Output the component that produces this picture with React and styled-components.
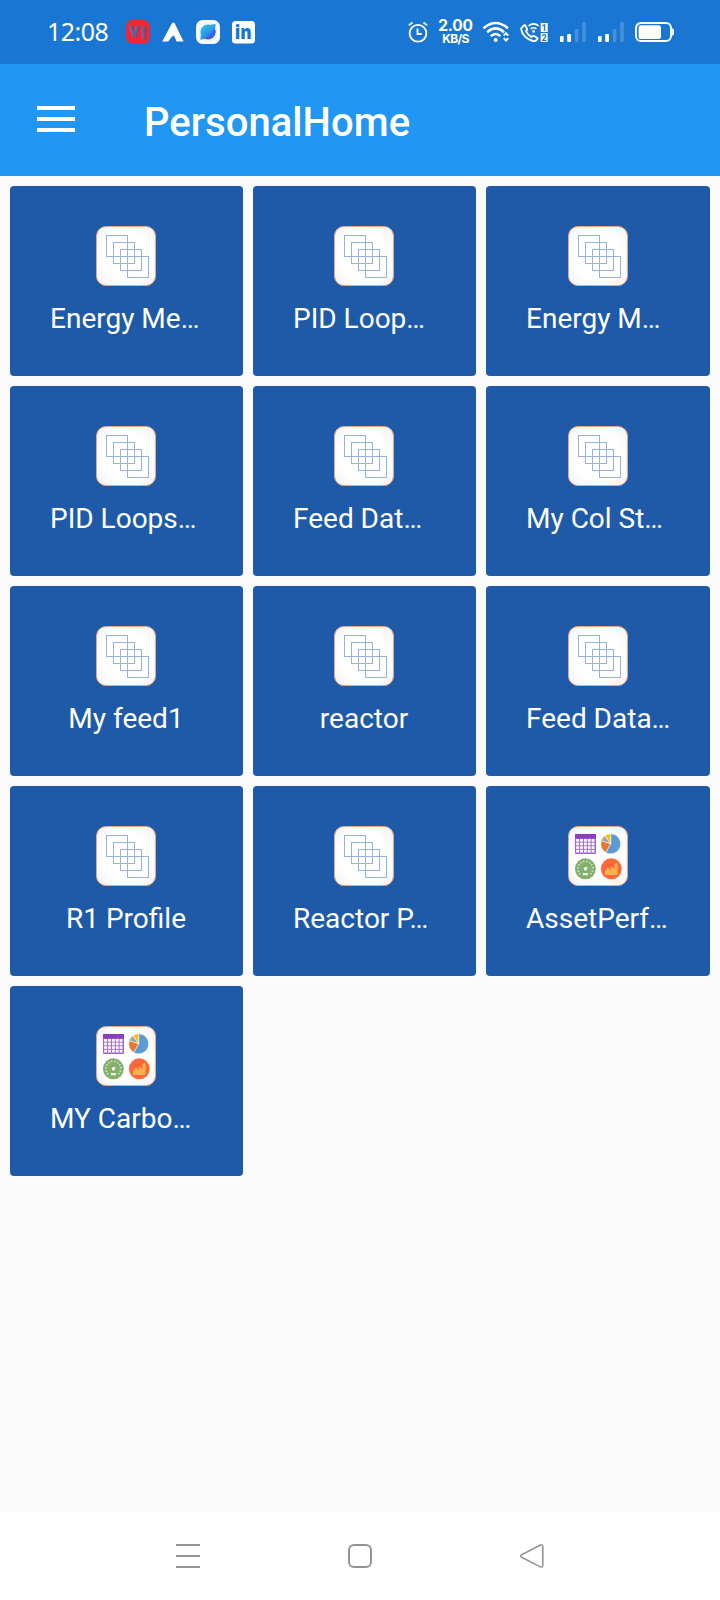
import React from "react";
import styled, { createGlobalStyle } from "styled-components";

const GlobalStyle = createGlobalStyle`
  * {
    box-sizing: border-box;
  }

  body {
    margin: 0;
    background: #fafafa;
    font-family: Roboto, "Noto Sans", sans-serif;
  }
`;

const Screen = styled.div`
  display: flex;
  flex-direction: column;
  width: 720px;
  height: 1600px;
  overflow: hidden;
  background: #fafafa;
`;

const StatusBar = styled.header`
  display: flex;
  align-items: center;
  justify-content: space-between;
  height: 64px;
  padding: 0 46px 0 47px;
  background: #1976d2;
  color: #fff;
`;

const StatusGroup = styled.div`
  display: flex;
  align-items: center;
  gap: ${(props) => props.$gap}px;
`;

const Clock = styled.span`
  width: 67px;
  margin-bottom: 2px;
  font-family: "Noto Sans", sans-serif;
  font-size: 25px;
  line-height: 24px;
  letter-spacing: -0.5px;
`;

const Speed = styled.div`
  display: flex;
  flex-direction: column;
  align-items: center;
  width: 33px;
  font-family: Inter, sans-serif;
  font-weight: 700;
  white-space: nowrap;
`;

const SpeedValue = styled.span`
  font-size: 15.5px;
  line-height: 13px;
  letter-spacing: -0.2px;
`;

const SpeedUnit = styled.span`
  font-size: 12px;
  line-height: 13px;
  letter-spacing: -0.7px;
`;

const StatusSvg = styled.svg`
  display: block;
  flex: none;
  height: 24px;
`;

const AppBar = styled.div`
  display: flex;
  align-items: center;
  height: 112px;
  padding: 0 37px;
  background: #2196f3;
`;

const MenuButton = styled.div`
  display: flex;
  flex-direction: column;
  gap: 7px;
  width: 38px;
  margin-bottom: 2px;
`;

const MenuLine = styled.span`
  height: 4px;
  background: #fff;
`;

const Title = styled.h1`
  margin: 6px 0 0 69px;
  color: #fff;
  font-size: 40px;
  font-weight: 500;
  line-height: 48px;
  letter-spacing: 0.06px;
`;

const Grid = styled.main`
  flex: 1;
  display: grid;
  grid-template-columns: 233px 223px 224px;
  grid-auto-rows: 190px;
  align-content: start;
  gap: 10px;
  padding: 10px;
`;

const Card = styled.div`
  display: flex;
  flex-direction: column;
  align-items: center;
  padding: 40px 40px 0;
  border-radius: 4px;
  background: #1f5aa9;
`;

const TileSvg = styled.svg`
  display: block;
  flex: none;
  width: 60px;
  height: 60px;
  margin-right: 1px;
`;

const Label = styled.span`
  width: 100%;
  margin-top: 16px;
  padding-right: ${(props) => (props.$cut ? 0 : 1)}px;
  color: #fff;
  font-size: 28px;
  line-height: 34px;
  text-align: ${(props) => (props.$cut ? "left" : "center")};
  white-space: nowrap;
`;

const NavBar = styled.nav`
  display: flex;
  align-items: center;
  justify-content: space-between;
  height: 88px;
  padding: 0 176px;
  background: #fff;
`;

const NavSvg = styled.svg`
  display: block;
  width: 24px;
  height: 24px;
  fill: none;
  stroke: #949494;
  stroke-width: 2;
`;

const cards = [
  { name: "Energy Me…" },
  { name: "PID Loop…" },
  { name: "Energy M…" },
  { name: "PID Loops…" },
  { name: "Feed Dat…" },
  { name: "My Col St…" },
  { name: "My feed1" },
  { name: "reactor" },
  { name: "Feed Data…" },
  { name: "R1 Profile" },
  { name: "Reactor P…" },
  { name: "AssetPerf…", dashboard: true },
  { name: "MY Carbo…", dashboard: true },
];

const ViIcon = () => (
  <StatusSvg width="24" viewBox="0 0 24 24">
    <rect width="24" height="24" rx="6.5" fill="#ee2737" />
    <g fill="#5b62a0" stroke="#5b62a0" strokeWidth="0.7" fontWeight="900" fontSize="14">
      <text x="3.8" y="16.5">V</text>
      <text x="15.2" y="18.5" fontSize="17">!</text>
    </g>
  </StatusSvg>
);

const ArrowIcon = () => (
  <StatusSvg width="22" viewBox="0 0 22 24">
    <path d="M10.2 2.8h2.2L21.6 21.5h-7L12 15.5l-2.2 1.2-3.6 4.8h-6z" fill="#fff" />
  </StatusSvg>
);

const BrowserIcon = () => (
  <StatusSvg width="24" viewBox="0 0 24 24">
    <defs>
      <linearGradient id="globe" x1="0" y1="0" x2="0.8" y2="1">
        <stop offset="0" stopColor="#35c5e8" />
        <stop offset="0.55" stopColor="#299be8" />
        <stop offset="1" stopColor="#4457e8" />
      </linearGradient>
    </defs>
    <rect width="24" height="24" rx="6.5" fill="#f4f8fd" />
    <circle cx="12" cy="12" r="7.6" fill="url(#globe)" />
    <path d="M14.5 4.8L19.6 4l-.6 5.5zM4.9 14.5l-.6 5.3 5-.8z" fill="#2f9fe8" />
    <path d="M19 8.5Q15 16 8 18.5Q17.5 21 19.6 12z" fill="#3f5fe9" />
  </StatusSvg>
);

const LinkedinIcon = () => (
  <StatusSvg width="23" viewBox="0 0 23 24">
    <rect y="1" width="23" height="22.5" rx="3.5" fill="#fff" />
    <text
      x="2.8"
      y="19.3"
      fontSize="19"
      fontWeight="800"
      fontFamily="Open Sans, sans-serif"
      textLength="17"
      lengthAdjust="spacingAndGlyphs"
      fill="#1976d2"
    >
      in
    </text>
  </StatusSvg>
);

const AlarmIcon = () => (
  <StatusSvg width="20" viewBox="0 0 20 24" fill="none" stroke="#fff" strokeWidth="1.8">
    <circle cx="10" cy="13.3" r="8.4" />
    <path d="M9.5 8.6v5.4h4.3M.8 5.4l3.7-2.9M19.2 5.4l-3.7-2.9" />
  </StatusSvg>
);

const WifiIcon = () => (
  <StatusSvg width="26" viewBox="0.5 0 26 24" fill="none" stroke="#fff" strokeWidth="2.5">
    <path d="M1 8.2Q13.2-2.2 25.4 8.2" />
    <path d="M4.6 12.2Q13.2 4.6 21.6 12.2" />
    <path d="M8.2 16.1Q13.2 11.8 18 16.1" />
    <circle cx="13.2" cy="20" r="2" fill="#fff" stroke="none" />
    <path d="M21.2 15.6l2.3-2.5 2.3 2.5M21.2 18.2l2.3 2.5 2.3-2.5" strokeWidth="1.8" />
  </StatusSvg>
);

const WifiCallIcon = () => (
  <StatusSvg width="28" viewBox="0 0 28 24">
    <path
      d="M1.6 7.8L3.8 5.6Q4.8 4.8 5.6 6L7 8.7Q7.4 9.8 6 11Q7.5 14.8 11.4 17Q13 15.3 14.2 16L17 17.7Q18 18.4 17.2 19.3Q15.4 21.6 12.8 21Q3 18 1.2 9.4Q1 8.4 1.6 7.8z"
      fill="none"
      stroke="#fff"
      strokeWidth="1.9"
    />
    <path d="M8.6 5.8Q13.6 2 18.6 5.8M10.8 8.8Q13.6 6.6 16.4 8.8" fill="none" stroke="#fff" strokeWidth="1.6" />
    <circle cx="13.6" cy="11.4" r="1.4" fill="#fff" />
    <path d="M20.7 3h7v9h-7zM20.7 13h7v9h-7z" fill="#fff" />
    <text x="24.2" y="10.6" fontSize="9" fontWeight="700" textAnchor="middle" fill="#1976d2">1</text>
    <text x="24.2" y="20.7" fontSize="9" fontWeight="700" textAnchor="middle" fill="#1976d2">2</text>
  </StatusSvg>
);

const SignalIcon = () => (
  <StatusSvg width="26" viewBox="0 0 26 24" fill="#fff">
    <rect x="0" y="16" width="3.6" height="6" rx="1" />
    <rect x="7.2" y="14" width="3.8" height="8" rx="1" />
    <rect x="14.8" y="9" width="3.6" height="13" rx="1" opacity="0.2" />
    <rect x="22.2" y="2" width="3.6" height="20" rx="1" opacity="0.2" />
  </StatusSvg>
);

const BatteryIcon = () => (
  <StatusSvg width="39" viewBox="0 0 39 24">
    <rect x="1" y="3" width="35" height="18" rx="5" fill="none" stroke="#fff" strokeWidth="1.9" />
    <rect x="3.6" y="5.2" width="22.4" height="13.8" rx="2.5" fill="#fff" />
    <path d="M37 8.2q2 .6 2 2v3.6q0 1.4-2 2z" fill="#fff" />
  </StatusSvg>
);

const Tile = () => (
  <>
    <defs>
      <radialGradient id="tile" r="0.75">
        <stop offset="0.55" stopColor="#fff" />
        <stop offset="1" stopColor="#eee" />
      </radialGradient>
    </defs>
    <rect x="0.5" y="0.5" width="59" height="59" rx="9.5" fill="url(#tile)" stroke="#e3a888" />
  </>
);

const LayersIcon = () => (
  <TileSvg viewBox="0 0 60 60">
    <Tile />
    <g fill="none" stroke="#97b2dc" strokeWidth="1">
      <rect x="10.5" y="9.5" width="21" height="21" />
      <rect x="17.5" y="16.5" width="21" height="21" />
      <rect x="24.5" y="23.5" width="21" height="21" />
      <rect x="31.5" y="30.5" width="21" height="21" />
    </g>
  </TileSvg>
);

const DashboardIcon = () => (
  <TileSvg viewBox="0 0 60 60">
    <Tile />
    {/* calendar */}
    <rect x="7" y="8" width="21" height="20" rx="1" fill="#a265cc" />
    <rect x="7" y="8" width="21" height="4.5" fill="#8b3fc0" />
    {[0, 1, 2, 3].map((row) =>
      [0, 1, 2, 3, 4].map((col) => (
        <rect key={`${row}-${col}`} x={8.2 + col * 3.85} y={13 + row * 3.6} width="2.9" height="2.7" fill="#fff" />
      ))
    )}
    {/* pie */}
    <g stroke="#fff" strokeWidth="0.5">
      <path d="M42.7 17.8V7.8A10 10 0 1 1 37.7 26.5z" fill="#5b9bd5" />
      <path d="M42.7 17.8L37.7 26.5A10 10 0 0 1 33.2 14.7z" fill="#e67831" />
      <path d="M42.7 17.8L33.2 14.7A10 10 0 0 1 37 9.6z" fill="#a5a5a5" />
      <path d="M42.7 17.8L37 9.6A10 10 0 0 1 42.7 7.8z" fill="#f9c20a" />
    </g>
    {/* gauge */}
    <circle cx="17.4" cy="42.8" r="10.5" fill="#84b06e" />
    <path d="M12.2 48A7.4 7.4 0 1 1 22.6 48" fill="none" stroke="#e8f2e2" strokeWidth="1.8" strokeDasharray="1 2" />
    <circle cx="17.4" cy="42.8" r="1.7" fill="#fff" />
    <path d="M17.4 42.8l2-2" stroke="#fff" strokeWidth="1" />
    <rect x="15" y="47.2" width="5" height="2" fill="#f3f8ef" />
    {/* area chart */}
    <circle cx="43.3" cy="42.8" r="10.5" fill="#fb6a3a" />
    <path d="M37 49v-4.5h1.5V42H41v2h1.5v-3H45v1.5h1.5V38l3-1.5V49z" fill="#fdb04f" />
    <path d="M37.5 40l3-2 2 2 3-3" fill="none" stroke="#d9503a" strokeWidth="1" strokeDasharray="1 1" />
  </TileSvg>
);

const HomeCard = ({ name, dashboard }) => (
  <Card>
    {dashboard ? <DashboardIcon /> : <LayersIcon />}
    <Label $cut={name.endsWith("…")}>{name}</Label>
  </Card>
);

const App = () => {
  return (
    <>
      <GlobalStyle />
      <Screen>
        <StatusBar>
          <StatusGroup $gap={12}>
            <Clock>12:08</Clock>
            <ViIcon />
            <ArrowIcon />
            <BrowserIcon />
            <LinkedinIcon />
          </StatusGroup>
          <StatusGroup $gap={11}>
            <AlarmIcon />
            <Speed>
              <SpeedValue>2.00</SpeedValue>
              <SpeedUnit>KB/S</SpeedUnit>
            </Speed>
            <WifiIcon />
            <StatusGroup $gap={12}>
              <WifiCallIcon />
              <SignalIcon />
              <SignalIcon />
            </StatusGroup>
            <BatteryIcon />
          </StatusGroup>
        </StatusBar>
        <AppBar>
          <MenuButton>
            <MenuLine />
            <MenuLine />
            <MenuLine />
          </MenuButton>
          <Title>PersonalHome</Title>
        </AppBar>
        <Grid>
          {cards.map((card, idx) => (
            <HomeCard key={idx} {...card} />
          ))}
        </Grid>
        <NavBar>
          <NavSvg viewBox="0 0 24 24">
            <path d="M0 1h24M0 12h24M0 23h24" />
          </NavSvg>
          <NavSvg viewBox="0 0 24 24">
            <rect x="1" y="1" width="22" height="22" rx="5" />
          </NavSvg>
          <NavSvg viewBox="0 0 24 24">
            <path d="M1.6 10.7L20 1.2Q22.8 0 22.8 3V20.8Q22.8 24 20 22.6L1.6 13.3Q-.2 12 1.6 10.7z" strokeWidth="1.6" />
          </NavSvg>
        </NavBar>
      </Screen>
    </>
  );
};

export default App;
